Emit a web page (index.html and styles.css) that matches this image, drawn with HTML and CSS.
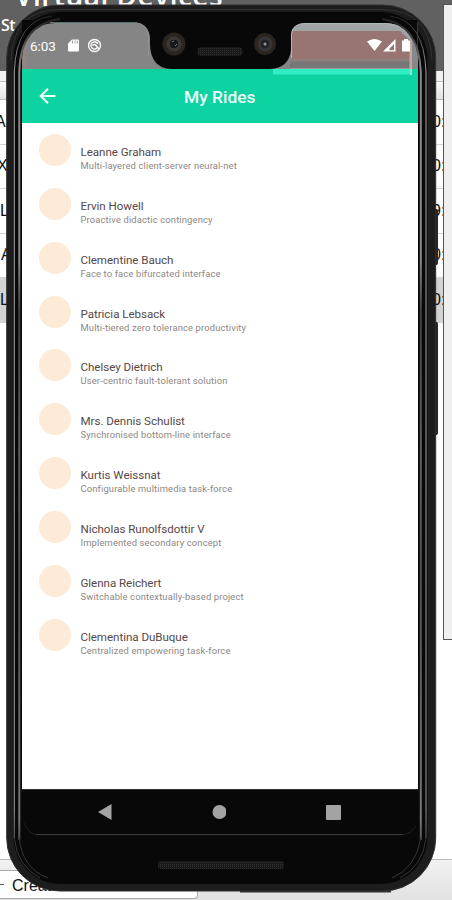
FILE: index.html
```html
<!DOCTYPE html>
<html lang="en">
<head>
<meta charset="utf-8">
<title>My Rides</title>
<link rel="stylesheet" href="styles.css">
</head>
<body>
<div class="manager">
  <header class="manager-head"><h1>Virtual Devices</h1><span>St</span></header>
  <div class="strip"></div>
  <div class="columns"></div>
  <div class="device-row"><span class="n1">AR</span><b>0:</b></div>
  <div class="device-row"><span class="n2">X</span><b>0:</b></div>
  <div class="device-row"><span class="n3">L</span><b>9:</b></div>
  <div class="device-row"><span class="n4">A</span><b>0:</b></div>
  <div class="device-row selected"><span class="n3">L</span><b>0:</b></div>
  <div class="space"></div>
  <footer class="manager-foot"><div class="create"><i></i><span>Create</span></div></footer>
</div>
<aside class="emulator-panel"></aside>

<div class="phone">
  <svg class="frame" viewBox="0 0 452 900" aria-hidden="true">
    <path d="M434 209h3q1 0 1 3v50q0 3-1 3h-3zM434 322h3q1 0 1 3v107q0 3-1 3h-3z" fill="#252525"/>
    <path d="M60 888H240V891H60zM240 888H391V892.500H240z" fill="#343434"/>
    <rect x="6.700" y="5" width="429" height="886" rx="53" fill="#1d1d1d" stroke="#303030"/>
    <rect x="13.500" y="12" width="414" height="872" rx="47" fill="#080808"/>
    <path d="M11 60Q13 9.500 60 9.500H382Q430 9.500 432 60" fill="none" stroke="#333"/>
  </svg>
  <main class="screen">
    <div class="status">
      <span class="time">6:03</span>
    </div>
    <header class="appbar">
      <svg class="back" width="18" height="18" viewBox="0 0 18 18"><path d="M16.500 9H2M9 1.700L1.700 9L9 16.300" fill="none" stroke="#e9fff8" stroke-width="2"/></svg>
      <h2>My Rides</h2>
    </header>
    <ul class="rides">
      <li><i></i><div><h3>Leanne Graham</h3><p>Multi-layered client-server neural-net</p></div></li>
      <li><i></i><div><h3>Ervin Howell</h3><p>Proactive didactic contingency</p></div></li>
      <li><i></i><div><h3>Clementine Bauch</h3><p>Face to face bifurcated interface</p></div></li>
      <li><i></i><div><h3>Patricia Lebsack</h3><p>Multi-tiered zero tolerance productivity</p></div></li>
      <li><i></i><div><h3>Chelsey Dietrich</h3><p>User-centric fault-tolerant solution</p></div></li>
      <li><i></i><div><h3>Mrs. Dennis Schulist</h3><p>Synchronised bottom-line interface</p></div></li>
      <li><i></i><div><h3>Kurtis Weissnat</h3><p>Configurable multimedia task-force</p></div></li>
      <li><i></i><div><h3>Nicholas Runolfsdottir V</h3><p>Implemented secondary concept</p></div></li>
      <li><i></i><div><h3>Glenna Reichert</h3><p>Switchable contextually-based project</p></div></li>
      <li><i></i><div><h3>Clementina DuBuque</h3><p>Centralized empowering task-force</p></div></li>
    </ul>
    <nav class="navbar">
      <svg width="14" height="16" viewBox="0 0 14 16"><path d="M0 8L13.500 0V16z" fill="#a3a3a3"/></svg>
      <svg width="14" height="14" viewBox="0 0 14 14"><circle cx="7" cy="7" r="7" fill="#a3a3a3"/></svg>
      <svg width="15" height="15" viewBox="0 0 15 15"><rect width="15" height="15" rx="1" fill="#a3a3a3"/></svg>
    </nav>
  </main>
  <svg class="frame" viewBox="0 0 452 900" aria-hidden="true">
    <defs>
      <pattern id="mesh" width="2" height="2" patternUnits="userSpaceOnUse"><rect width="2" height="2" fill="#191919"/><rect width="1" height="1" fill="#303030"/></pattern>
      <linearGradient id="shade" x1="0" y1="0" x2="0" y2="1"><stop offset="0" stop-color="#958482"/><stop offset=".4" stop-color="#777"/><stop offset=".85" stop-color="#777"/><stop offset="1" stop-color="#aaa"/></linearGradient>
      <linearGradient id="rail" gradientUnits="userSpaceOnUse" x1="0" y1="20" x2="0" y2="880"><stop offset="0" stop-color="#222"/><stop offset=".06" stop-color="#888"/><stop offset=".28" stop-color="#888"/><stop offset=".34" stop-color="#404044"/><stop offset=".5" stop-color="#606064"/><stop offset=".65" stop-color="#505054"/><stop offset=".93" stop-color="#77777b"/><stop offset="1" stop-color="#080808"/></linearGradient>
      <linearGradient id="edge" gradientUnits="userSpaceOnUse" x1="0" y1="15" x2="0" y2="880"><stop offset="0" stop-color="#222"/><stop offset=".07" stop-color="#aaa"/><stop offset=".92" stop-color="#999"/><stop offset="1" stop-color="#111"/></linearGradient>
    </defs>
    <path d="M290 59H412V69H290z" fill="url(#shade)"/>
    <path d="M291 23H391Q412 29 417 48V69H411V41L400 31H291z" fill="#a0a5a6"/>
    <path d="M411 41H418V69H411z" fill="#858989"/>
    <path d="M291 31H400L409.500 41V59H291z" fill="#987573"/>
    <path d="M409.500 41H412V74H409.500z" fill="#c7a5a3"/>
    <path d="M273 69H418V74.500H273z" fill="#30efc5"/>
    <path d="M412 69H418V75H412z" fill="#0dd2a1"/>
    <path d="M410 69H412V75H410z" fill="#8ce9ce"/>
    <path d="M22 40H27V69H22z" fill="#988684" opacity=".5"/>
    <path fill-rule="evenodd" d="M22 20H417.600V69H22zM22 69H171Q151 68 150 45V38Q149 24 136 23H55Q24 24 22 58zM270 69H417.600V56Q414 23 384 23H305Q291 24 291 35V50Q289 68 270 69z" fill="#080808"/>
    <path d="M50 22.700H136Q148 24 148.500 38V57" fill="none" stroke="#8e9295"/>
    <path d="M52 22.500H137" stroke="#547371"/>
    <path d="M291.500 58V34Q293 23.500 305 23.500H384Q409 24 416 48" fill="none" stroke="#aeb9b9"/>
    <g fill="none">
      <path d="M19.300 840V72Q20 24 60 19M420.800 840V72Q419 24 382 19" stroke="url(#rail)" stroke-width="2"/>
      <path d="M14.300 838V72Q16 20 52 16M426 838V72Q424 20 390 16" stroke="url(#edge)"/>
      <path d="M14.300 838Q17 866 40 878M19.300 838Q22 868 48 878M426 838Q423 866 400 878M420.800 838Q416 868 392 878" stroke="#37373a"/>
    </g>
    <g>
      <circle cx="174" cy="44" r="11.500" fill="#2b241f"/><circle cx="174" cy="44" r="7.500" fill="#3b3733"/><circle cx="174" cy="44" r="5" fill="#181818" stroke="#444"/><path d="M172 42l2-1M175 46l2-2" stroke="#777"/>
      <circle cx="265" cy="44" r="11" fill="#2b241f"/><circle cx="265" cy="44" r="7.500" fill="#373534"/><circle cx="265" cy="44" r="5" fill="#222" stroke="#383838"/><circle cx="265" cy="44" r="1.500" fill="#999"/>
    </g>
    <rect x="197.500" y="47" width="45" height="9" rx="4" fill="url(#mesh)"/>
    <g fill="#fff">
      <path d="M72 39.500h6q1 0 1 1v10q0 1-1 1h-9q-1 0-1-1v-7z"/>
      <path d="M72.500 40.500v3M75 40.500v3M77.300 40.500v3" stroke="#858585" stroke-width=".8"/>
      <g fill="none" stroke="#fff"><circle cx="94.500" cy="45.500" r="6" stroke-width="1.300"/><path d="M97.500 47.500A3.600 3.600 0 1 1 97.800 44M92.500 45.500q2-2 3.500 0l3 3.500" stroke-width="1.400"/></g>
      <path d="M367 41.500Q374.500 36.500 382 41.500L374.500 51z"/>
      <path fill-rule="evenodd" d="M395.500 39V51.500H383zM394 44L389.500 48.500V50.300H394z"/>
      <path d="M404 39h4v1.500h2V51.500H402V40.500h2z"/>
    </g>
    <path d="M22 789.500H417.500" stroke="#333"/>
    <path d="M24 823Q28 833 36 834.500H403Q411 834 416 826" fill="none" stroke="#202020"/>
    <path d="M36 834.600H403" stroke="#3c3c3c"/>
    <rect x="158" y="861" width="126" height="8" rx="3" fill="url(#mesh)"/>
  </svg>
</div>
</body>
</html>
```

FILE: styles.css
```css
* { box-sizing: border-box; }
body { margin: 0; width: 452px; height: 900px; overflow: hidden; position: relative; background: #fff; font-family: Roboto, sans-serif; }
h1, h2, h3, p, ul { margin: 0; padding: 0; }

.manager { display: flex; flex-direction: column; height: 900px; color: #111; }
.manager-head { height: 71px; background: #616161; color: #fff; overflow: hidden; font-family: "Open Sans", sans-serif; }
.manager-head h1 { font-size: 28px; line-height: 32px; font-weight: 600; margin: -21px 0 0 15px; letter-spacing: .5px; white-space: nowrap; }
.manager-head span { display: block; margin: 3px 0 0 1px; font-size: 16px; line-height: 22px; letter-spacing: -.5px; font-weight: 600; }
.strip { height: 11px; background: #f1f1f1; border-bottom: 1px solid #bbb; }
.columns { height: 18px; background: linear-gradient(#fafafa, #e2e2e2); border-bottom: 1px solid #bbb; }
.device-row { height: 44.5px; border-bottom: 1px solid #d5d5d5; display: flex; justify-content: space-between; align-items: center; font: 16px/20px "Liberation Sans", sans-serif; overflow: hidden; }
.device-row b { font-weight: 400; width: 20px; flex: none; }
.device-row.selected { background: #d3d3d3; }
.n1 { margin-left: -5px; }
.n2 { margin-left: -3px; }
.n3 { margin-left: 0; }
.n4 { margin-left: 1px; }
.space { flex: 1; }
.manager-foot { height: 41px; padding-top: 10px; background: linear-gradient(#f1f1f1, #e2e2e2); border-top: 1px solid #bcbcbc; }
.create { width: 198px; height: 29px; border: 1px solid #aaa; border-left: 0; border-radius: 0 0 4px 0; background: #fff; display: flex; align-items: center; gap: 8px; font: 16px/20px "Liberation Sans", sans-serif; }
.create i { width: 4px; height: 1px; background: #555; }
.create span { margin-top: 2px; }

.emulator-panel { position: absolute; left: 443px; top: 4px; width: 12px; height: 636px; background: #efefef; border: 1px solid #555; }

.phone { position: absolute; inset: 0; padding: 22px 34.5px 65px 22px; }
.frame { position: absolute; left: 0; top: 0; width: 452px; height: 900px; }
.screen { position: relative; height: 813px; display: flex; flex-direction: column; background: #fff; }
.status { height: 47px; background: #858585; padding: 16px 0 0 8px; color: #fff; }
.time { display: block; font-size: 13.5px; line-height: 16px; letter-spacing: -.1px; }
.appbar { height: 54px; background: #0dd2a1; display: grid; grid-template-columns: 34px 1fr 34px; align-items: center; color: #eafff9; }
.back { margin-left: 16.5px; }
.appbar h2 { text-align: center; font-size: 17.4px; line-height: 22px; font-weight: 500; margin-top: 2px; }
.rides { flex: 1; list-style: none; padding: 11px 0 0 17px; }
.rides li { height: 53.85px; display: flex; gap: 9.5px; }
.rides i { width: 32px; height: 32px; flex: none; border-radius: 50%; background: #fdead7; }
.rides h3 { margin-top: 10px; font-size: 11.6px; line-height: 16px; font-weight: 400; color: #564848; letter-spacing: -.05px; white-space: nowrap; }
.rides p { font-size: 9.4px; line-height: 12px; color: #8c8683; letter-spacing: .15px; white-space: nowrap; }
.navbar { height: 46px; background: #080808; display: flex; align-items: center; justify-content: space-between; padding: 0 76.500px 0 75.500px; }
.navbar circle { transform: translateX(.5px); }
```
